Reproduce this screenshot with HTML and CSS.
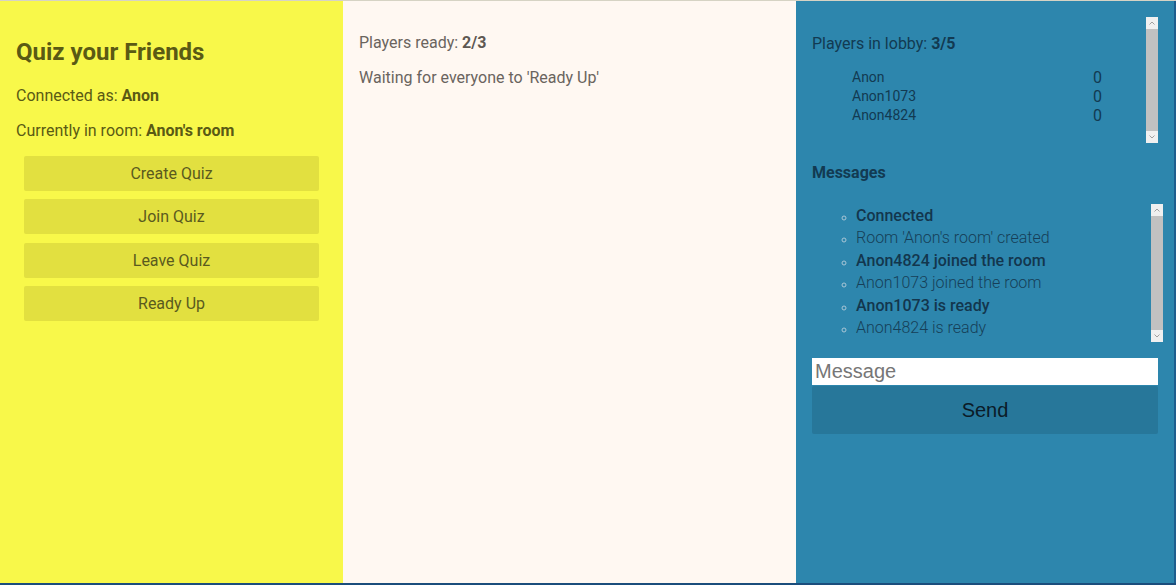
FILE: index.html
```html
<!DOCTYPE html>
<html>
<head>
<meta charset="utf-8">
<link rel="stylesheet" href="styles.css">
</head>
<body>
<div class="app">
  <aside class="side">
    <h1 class="title">Quiz your Friends</h1>
    <p class="info">Connected as: <b>Anon</b></p>
    <p class="info">Currently in room: <b>Anon's room</b></p>
    <div class="buttons">
      <button class="btn">Create Quiz</button>
      <button class="btn">Join Quiz</button>
      <button class="btn">Leave Quiz</button>
      <button class="btn">Ready Up</button>
    </div>
  </aside>
  <main class="main">
    <p class="status">Players ready: <b>2/3</b></p>
    <p class="status">Waiting for everyone to 'Ready Up'</p>
  </main>
  <section class="chat">
    <div class="scrollbox lobby">
      <div class="scroll-content">
        <h2 class="lobby-title">Players in lobby: <b>3/5</b></h2>
        <div class="players">
          <span class="pname">Anon</span><span class="pscore">0</span>
          <span class="pname">Anon1073</span><span class="pscore">0</span>
          <span class="pname">Anon4824</span><span class="pscore">0</span>
        </div>
      </div>
      <div class="sbar">
        <span class="sbtn"><svg viewBox="0 0 12 12" width="12" height="12"><path d="M3.5 7.5 L6 5 L8.5 7.5" fill="none" stroke="#a0a0a0" stroke-width="1"/></svg></span>
        <span class="strack"></span>
        <span class="sbtn"><svg viewBox="0 0 12 12" width="12" height="12"><path d="M3.5 4.5 L6 7 L8.5 4.5" fill="none" stroke="#a0a0a0" stroke-width="1"/></svg></span>
      </div>
    </div>
    <h3 class="msg-title">Messages</h3>
    <div class="scrollbox messages">
      <ul class="msgs scroll-content">
        <li class="strong">Connected</li>
        <li class="light">Room 'Anon's room' created</li>
        <li class="strong">Anon4824 joined the room</li>
        <li class="light">Anon1073 joined the room</li>
        <li class="strong">Anon1073 is ready</li>
        <li class="light">Anon4824 is ready</li>
      </ul>
      <div class="sbar">
        <span class="sbtn"><svg viewBox="0 0 12 12" width="12" height="12"><path d="M3.5 7.5 L6 5 L8.5 7.5" fill="none" stroke="#a0a0a0" stroke-width="1"/></svg></span>
        <span class="strack"></span>
        <span class="sbtn"><svg viewBox="0 0 12 12" width="12" height="12"><path d="M3.5 4.5 L6 7 L8.5 4.5" fill="none" stroke="#a0a0a0" stroke-width="1"/></svg></span>
      </div>
    </div>
    <input class="msg-input" type="text" placeholder="Message">
    <button class="send">Send</button>
  </section>
</div>
</body>
</html>
```
FILE: styles.css
```css
* { box-sizing: border-box; }
html, body { margin: 0; padding: 0; height: 100%; }
body {
  font-family: Roboto, "Liberation Sans", sans-serif;
  overflow: hidden;
}
.app {
  display: flex;
  height: 585px;
  border-top: 1px solid #d6d3c4;
  border-bottom: 2px solid #1b4d7c;
}
.side {
  width: 343px;
  flex: none;
  background: #f8f84a;
  padding: 16px;
  color: #5a5a14;
}
.title {
  margin: 20px 0 0;
  font-size: 24px;
  font-weight: 700;
  line-height: 30px;
  color: #5a5a14;
}
.info {
  margin: 19px 0 0;
  font-size: 16px;
  line-height: 20px;
}
.info + .info { margin-top: 15px; }
.info b { font-weight: 700; }
.buttons {
  display: flex;
  flex-direction: column;
  gap: 8.3px;
  padding: 0 8px;
  margin-top: 15px;
}
.btn {
  height: 35px;
  border: none;
  border-radius: 2px;
  background: #e2e040;
  color: #5a5a1e;
  font-family: Roboto, "Liberation Sans", sans-serif;
  font-size: 16px;
}
.main {
  width: 453px;
  flex: none;
  background: #fff8f2;
  padding: 16px;
  color: #6a645e;
}
.status {
  margin: 16px 0 0;
  font-size: 16px;
  line-height: 20px;
}
.status + .status { margin-top: 15px; }
.status b { font-weight: 700; color: #5e5853; }
.chat {
  flex: 1;
  background: #2d86ad;
  padding: 16px 16px 16px 16px;
  display: flex;
  flex-direction: column;
  color: #123a52;
  border-right: 2px solid #1e5e8e;
}
.scrollbox {
  display: flex;
}
.scroll-content { flex: 1; }
.lobby { height: 126px; flex: none; }
.lobby-title {
  margin: 17px 0 0;
  font-size: 16px;
  font-weight: 400;
  line-height: 20px;
}
.lobby-title b { font-weight: 700; }
.players {
  display: grid;
  grid-template-columns: 1fr auto;
  margin: 14px 44px 0 40px;
}
.pname { font-size: 14px; line-height: 19px; }
.pscore { font-size: 16px; line-height: 19px; }
.sbar {
  width: 12px;
  flex: none;
  display: flex;
  flex-direction: column;
  background: #c1c1c1;
}
.sbtn {
  height: 12px;
  flex: none;
  background: #f0f0f0;
  display: block;
}
.sbtn svg { display: block; }
.strack { flex: 1; background: #c1c1c1; }
.msg-title {
  margin: 20px 0 0;
  font-size: 16px;
  font-weight: 700;
  line-height: 20px;
}
.messages {
  height: 138px;
  flex: none;
  margin-top: 21px;
  margin-right: -5px;
}
.msgs {
  margin: 0;
  padding: 1px 0 0 44px;
  list-style: circle;
  font-size: 16px;
  line-height: 22.4px;
}
.msgs li::marker { color: #a9c6d6; font-size: 12px; }
.msgs .strong { font-weight: 500; color: #13364d; }
.msgs .light { font-weight: 300; color: #163f58; }
.msg-input {
  margin-top: 16px;
  height: 27px;
  flex: none;
  border: none;
  outline: none;
  padding: 0 3px;
  font-family: "Liberation Sans", Arial, sans-serif;
  font-size: 20px;
  background: #fff;
}
.msg-input::placeholder { color: #767676; }
.send {
  margin-top: 1px;
  height: 48px;
  flex: none;
  border: none;
  border-radius: 2px;
  background: #27779a;
  color: #0b1b28;
  font-family: "Liberation Sans", Arial, sans-serif;
  font-size: 20px;
}
```
